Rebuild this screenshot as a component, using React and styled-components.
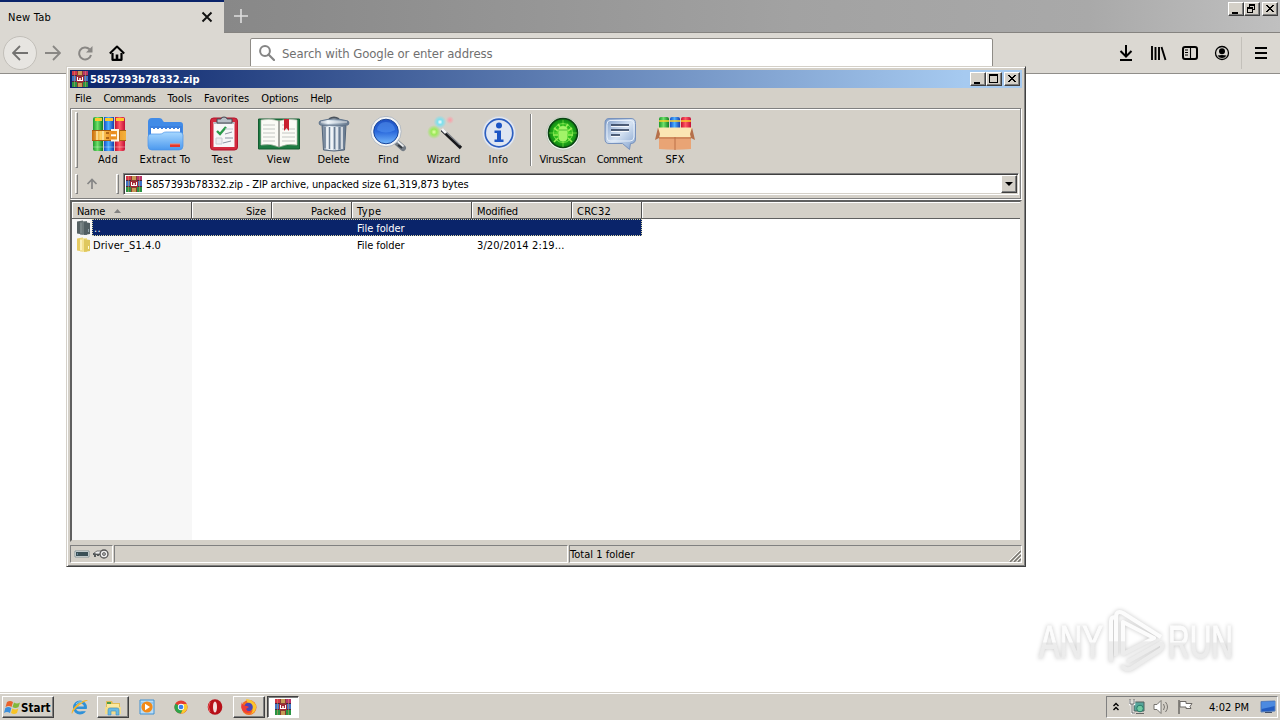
import React, { useLayoutEffect, useRef } from 'react';
import styled, { createGlobalStyle, css } from 'styled-components';

const face = '#d4d0c8';
const navy = '#0a246a';

const Global = createGlobalStyle`
  * { box-sizing: border-box; }
  html, body { margin: 0; padding: 0; overflow: hidden; background: #fff; }
  body { font: 11px/14px "DejaVu Sans Condensed", "DejaVu Sans", sans-serif; color: #000; }
  svg { display: block; flex: none; }
`;

const Span = styled.span`
  display: inline-block;
  white-space: pre;
  flex: none;
  padding-top: 2px;
`;

/* Spreads the letters so that the label takes the given width. */
function Label({ w, children, ...rest }) {
  const ref = useRef(null);
  useLayoutEffect(() => {
    const el = ref.current;
    el.style.letterSpacing = '0px';
    const natural = el.getBoundingClientRect().width;
    el.style.letterSpacing = `${(w - natural) / children.length}px`;
  }, [w, children]);
  return <Span ref={ref} {...rest}>{children}</Span>;
}

const Desktop = styled.div`
  position: relative;
  width: 1280px;
  height: 720px;
  display: flex;
  flex-direction: column;
  background: #fff;
  overflow: hidden;
`;

/* ---------- browser ---------- */
const TabStrip = styled.div`
  height: 33px;
  display: flex;
  background: linear-gradient(90deg, #808080 0, #8b8b8b 24%, #a2a2a2 62%, #a9a9a9 85%, #c0c0c0 100%);
`;
const Tab = styled.div`
  width: 224px;
  display: flex;
  align-items: center;
  justify-content: space-between;
  padding: 0 11px 2px 8px;
  border-top: 2px solid ${navy};
  background: #dbd8d2;
`;
const StripRest = styled.div`
  flex: 1;
  display: flex;
  align-items: flex-start;
  justify-content: space-between;
  padding: 2px 2px 0 9px;
  border-bottom: 1px solid #858380;
`;
const NewTab = styled.div`
  padding-top: 6px;
`;
const CaptionButtons = styled.div`
  display: flex;
  align-items: center;
`;
const CaptionButton = styled.div`
  width: 16px;
  height: 14px;
  margin-left: ${(p) => p.$gap || 0}px;
  background: ${face};
  border: 1px solid;
  border-color: #fff #404040 #404040 #fff;
  box-shadow: inset -1px -1px 0 #808080;
`;
const NavBar = styled.div`
  height: 41px;
  display: flex;
  align-items: flex-start;
  background: #dbd8d2;
  border-bottom: 1px solid #908e8a;
`;
const NavButtons = styled.div`
  width: 250px;
  display: flex;
  align-items: center;
  height: 40px;
  padding-left: 3px;
`;
const BackCircle = styled.div`
  width: 34px;
  height: 34px;
  display: flex;
  align-items: center;
  justify-content: center;
  border-radius: 50%;
  border: 1px solid #c2bfb9;
  background: #e7e5e1;
  margin-right: 8px;
`;
const SearchBox = styled.div`
  width: 743px;
  height: 32px;
  margin-top: 5px;
  display: flex;
  align-items: center;
  gap: 7px;
  padding: 0 8px 2px;
  border: 1px solid #8f8c87;
  border-radius: 2px;
  background: #fff;
  color: #707070;
  font-size: 13px;
`;
const NavTools = styled.div`
  flex: 1;
  height: 40px;
  display: flex;
  align-items: center;
  justify-content: flex-end;
  gap: 14px;
  padding-right: 10px;
`;
const ToolRule = styled.div`
  width: 1px;
  height: 32px;
  margin: 0 -4px;
  background: #c3c0ba;
`;
const Page = styled.div`
  flex: 1;
  background: #fff;
`;

/* ---------- archive window ---------- */
const Window = styled.div`
  position: absolute;
  left: 66px;
  top: 66px;
  width: 960px;
  height: 501px;
  display: flex;
  flex-direction: column;
  padding: 2px 2px 1px;
  background: ${face};
  border: 1px solid;
  border-color: ${face} #404040 #404040 ${face};
  box-shadow: inset 1px 1px 0 #fff, inset -1px -1px 0 #808080;
`;
const TitleBar = styled.div`
  height: 18px;
  margin: 1px 1px 0;
  display: flex;
  align-items: center;
  gap: 2px;
  padding: 0 2px;
  color: #fff;
  font-weight: bold;
  background: linear-gradient(90deg, ${navy}, #a6caf0 94%);
`;
const Spacer = styled.div`
  flex: 1;
`;
const MenuBar = styled.div`
  height: 20px;
  display: flex;
  align-items: center;
  padding-left: 6px;
  gap: 12px;
`;
const Bars = styled.div`
  height: 91px;
  margin: 0 2px 0 1px;
  border: 1px solid #808080;
  box-shadow: inset 1px 1px 0 #fff, 1px 1px 0 #fff;
`;
const ToolBar = styled.div`
  height: 63px;
  display: flex;
  padding: 3px 0 0 4px;
`;
const Grip = styled.div`
  width: 3px;
  height: ${(p) => p.$h}px;
  margin-right: ${(p) => p.$after}px;
  background: ${face};
  border: 1px solid;
  border-color: #fff #808080 #808080 #fff;
`;
const Tool = styled.div`
  width: ${(p) => p.$w}px;
  display: flex;
  flex-direction: column;
  align-items: center;
  gap: 1px;
  padding-top: 4px;
  > span { padding-top: 0; }
`;
const ToolRuleTall = styled.div`
  width: 2px;
  height: 52px;
  margin: 2px 0 0 4px;
  background: #fff;
  border-left: 1px solid #808080;
`;
const AddressRow = styled.div`
  height: 26px;
  display: flex;
  align-items: center;
  padding: 0 1px 2px 4px;
`;
const UpCell = styled.div`
  width: 38px;
  padding-left: 6px;
`;
const AddressBox = styled.div`
  flex: 1;
  height: 22px;
  display: flex;
  align-items: center;
  gap: 4px;
  padding: 0 1px 0 2px;
  background: #fff;
  border: 1px solid;
  border-color: #808080 #fff #fff #808080;
  box-shadow: inset 1px 1px 0 #404040, inset -1px -1px 0 ${face};
`;
const DropButton = styled(CaptionButton)`
  height: 18px;
  display: flex;
  align-items: center;
  justify-content: center;
`;
const List = styled.div`
  height: 342px;
  margin: 1px 1px 0;
  display: flex;
  flex-direction: column;
  background: #fff;
  border: 2px solid;
  border-color: #606060 ${face} ${face} #606060;
  box-shadow: inset -1px 0 0 #f2f0ec;
`;
const columns = css`
  display: grid;
  grid-template-columns: 120px 80px 80px 120px 100px 70px 1fr;
  grid-template-rows: 17px;
`;
const HeaderRow = styled.div`
  ${columns}
  flex: none;
  height: 17px;
`;
const HeaderCell = styled.div`
  display: flex;
  align-items: center;
  gap: 9px;
  justify-content: ${(p) => (p.$right ? 'flex-end' : 'flex-start')};
  padding: 1px 5px 0;
  background: ${face};
  border-bottom: 1px solid #606060;
  border-right: ${(p) => (p.$last ? 0 : 1)}px solid #505050;
  box-shadow: inset 1px 1px 0 #fff;
`;
const Rows = styled.div`
  flex: 1;
  background: linear-gradient(90deg, #f7f7f7 120px, #fff 120px);
`;
const Row = styled.div`
  ${columns}
  height: 17px;
  align-items: center;
  position: relative;
  color: ${(p) => (p.$on ? '#fff' : '#000')};
  background: ${(p) => (p.$on ? `linear-gradient(90deg, transparent 20px, ${navy} 20px, ${navy} 570px, transparent 570px)` : 'none')};
`;
const Focus = styled.div`
  position: absolute;
  left: 20px;
  top: 0;
  width: 550px;
  height: 17px;
  border: 1px dotted #d8d4a0;
`;
const Cell = styled.div`
  padding-left: ${(p) => (p.$col === 1 ? 4 : 5)}px;
  display: flex;
  align-items: center;
  gap: ${(p) => p.$gap || 1}px;
  grid-column: ${(p) => p.$col};
`;
const StatusBar = styled.div`
  height: 18px;
  margin: 3px 1px 0;
  display: flex;
  gap: 1px;
`;
const StatusPane = styled.div`
  width: ${(p) => p.$w}px;
  display: flex;
  align-items: center;
  gap: 4px;
  padding: ${(p) => p.$pad || '0 1px'};
  justify-content: ${(p) => (p.$wide ? 'space-between' : 'flex-start')};
  border: 1px solid;
  border-color: #808080 #fff #fff #808080;
`;

/* ---------- taskbar ---------- */
const TaskBar = styled.div`
  height: 28px;
  display: flex;
  align-items: flex-end;
  padding: 0 2px 2px;
  background: ${face};
  box-shadow: inset 0 1px 0 ${face}, inset 0 2px 0 #fff;
`;
const TaskButton = styled.div`
  width: ${(p) => p.$w || 32}px;
  height: 22px;
  display: flex;
  align-items: center;
  justify-content: center;
  font-weight: bold;
  font-size: 11.5px;
  margin-right: ${(p) => p.$after || 2}px;
  background: ${(p) => (p.$down ? '#fff' : 'transparent')};
  ${(p) => (p.$raised || p.$down) && css`
    border: 1px solid;
    border-color: ${p.$down ? '#404040 #fff #fff #404040' : '#fff #404040 #404040 #fff'};
    box-shadow: ${p.$down ? 'inset 1px 1px 0 #808080' : 'inset -1px -1px 0 #808080'};
  `}
`;
const StartButton = styled(TaskButton)`
  justify-content: flex-start;
  padding-left: 1px;
`;
const Tray = styled.div`
  width: 172px;
  height: 22px;
  display: flex;
  align-items: center;
  padding: 0 1px 0 6px;
  gap: 8px;
  border: 1px solid;
  border-color: #808080 #fff #fff #808080;
`;
const Watermark = styled.div`
  position: absolute;
  left: 1028px;
  top: 601px;
`;

/* ---------- glyphs ---------- */
const Svg = ({ w = 16, h = 16, vb, children, ...r }) => (
  <svg width={w} height={h} viewBox={vb || `0 0 ${w} ${h}`} fill="none" {...r}>{children}</svg>
);

const capPaths = {
  min: <path d="M3 9h6v2H3z" fill="#000" />,
  max: <path fillRule="evenodd" d="M2 1h9v9H2zM3 3v6h7V3z" fill="#000" />,
  restore: <path fillRule="evenodd" d="M4 1h6v6H8v3H2V4h2zM5 3v1h3v2h1V3zM3 6v3h4V6z" fill="#000" />,
  close: <path d="M3 2h2v1h1v1h2V3h1V2h2v1h-1v1H9v1H8v1h1v1h1v1h1v1H9V8H8V7H6v1H5v1H3V8h1V7h1V6h1V5H5V4H4V3H3z" fill="#000" />,
};
const Caption = ({ kind, gap }) => (
  <CaptionButton $gap={gap}>
    <Svg w={14} h={12} shapeRendering="crispEdges">{capPaths[kind]}</Svg>
  </CaptionButton>
);

const RarSmall = () => (
  <Svg shapeRendering="crispEdges">
    <path d="M0 0h16v5H0z" fill="#d23448" />
    <path d="M10 0h6v5h-6z" fill="#b83468" />
    <path d="M0 5h16v6H0z" fill="#3f72c4" />
    <path d="M0 11h16v5H0z" fill="#2a9442" />
    <path d="M0 4h16v1H0zM0 10h16v1H0z" fill="#4a2440" />
    <path d="M2 0h1v16H2zM13 0h1v16h-1z" fill="#d8a060" opacity=".5" />
    <path d="M5 0h6v16H5z" fill="#8b3a30" />
    <path d="M6 0h4v4H6zM6 12h4v4H6z" fill="#c89a55" />
    <path d="M4 5h8v6H4z" fill="#a02838" />
    <path d="M5 6h1v3h1V7h2v2h1V6h1v4H5z" fill="#fff" />
    <path d="M7 7h2v2H7z" fill="#f0c8c0" />
  </Svg>
);

const FolderSmall = ({ dark }) => (
  <Svg>
    <path d="M1 1.500 7 .5v14L1 13.500z" fill={dark ? '#566163' : '#e6cb62'} />
    <path d="M4 1.500 11 1v14l-7-.5z" fill={dark ? '#6d797b' : '#f4e293'} />
    <path d="M8 2 14 3v11l-6 1z" fill={dark ? '#525f63' : '#dfc85e'} />
    <path d="M5 3v10" stroke={dark ? '#7f8b8c' : '#fff6c8'} strokeWidth="1.500" />
    <path d="M12 9h1v3h-1z" fill={dark ? '#91a3ab' : '#fffbd8'} />
  </Svg>
);

const Defs = () => (
  <svg width="0" height="0" style={{ position: 'absolute' }}>
    <defs>
      <linearGradient id="gG"><stop stopColor="#1d9a2c" /><stop offset=".45" stopColor="#6fe06a" /><stop offset="1" stopColor="#0f7f22" /></linearGradient>
      <linearGradient id="gB"><stop stopColor="#1450c8" /><stop offset=".45" stopColor="#4db0ff" /><stop offset="1" stopColor="#173fae" /></linearGradient>
      <linearGradient id="gR"><stop stopColor="#c81030" /><stop offset=".45" stopColor="#ff5a66" /><stop offset="1" stopColor="#c30f38" /></linearGradient>
      <linearGradient id="gO"><stop stopColor="#c96a0a" /><stop offset=".25" stopColor="#ffd060" /><stop offset=".6" stopColor="#e88a1c" /><stop offset="1" stopColor="#f4b23c" /></linearGradient>
      <linearGradient id="gF" x2="0" y2="1"><stop stopColor="#a8d8ff" /><stop offset="1" stopColor="#4b98ee" /></linearGradient>
      <linearGradient id="gT"><stop stopColor="#6a7c92" /><stop offset=".3" stopColor="#eaf2f8" /><stop offset=".65" stopColor="#a5b5c4" /><stop offset="1" stopColor="#5f6f85" /></linearGradient>
      <linearGradient id="gL" x2="0" y2="1"><stop stopColor="#1f50c0" /><stop offset=".5" stopColor="#2a68dc" /><stop offset="1" stopColor="#7cc0ff" /></linearGradient>
      <linearGradient id="gC" x2="1" y2="1"><stop stopColor="#7e9cc8" /><stop offset=".5" stopColor="#d5e2f2" /><stop offset="1" stopColor="#7f9fcc" /></linearGradient>
      <linearGradient id="gW" x2="0" y2="1"><stop offset=".5" stopColor="#fcfcfc" /><stop offset=".52" stopColor="#ececec" /></linearGradient>
      <radialGradient id="gV"><stop stopColor="#64ee30" /><stop offset=".6" stopColor="#23b41a" /><stop offset="1" stopColor="#0d8012" /></radialGradient>
      <radialGradient id="s1"><stop stopColor="#eaffb0" /><stop offset=".4" stopColor="#9bea58" /><stop offset="1" stopColor="#9bea58" stopOpacity="0" /></radialGradient>
      <radialGradient id="s2"><stop stopColor="#fff" /><stop offset=".4" stopColor="#7de0ee" /><stop offset="1" stopColor="#7de0ee" stopOpacity="0" /></radialGradient>
      <radialGradient id="s3"><stop stopColor="#ff9aa5" /><stop offset="1" stopColor="#ff9aa5" stopOpacity="0" /></radialGradient>
    </defs>
  </svg>
);

const toolArt = {
  Add: (
    <Svg w={36} h={36} style={{ marginLeft: 1 }}>
      <path d="M2 3q0-2 2-2h8v34H4q-2 0-2-2z" fill="url(#gG)" />
      <path d="M13 1h10v34H13z" fill="url(#gB)" />
      <path d="M24 1h8q2 0 2 2v30q0 2-2 2h-8z" fill="url(#gR)" />
      <path d="M4 2h7v3H4zM14 2h8v3h-8zM25 2h8v3h-8z" fill="#ffca2c" />
      <path d="M2 31h10M13 31h10M24 31h10" stroke="#fff" opacity=".35" />
      <path d="M1 14h34v11H1z" fill="url(#gO)" />
      <path d="M1 14.500h34M1 24.500h34" stroke="#a65c10" />
      <path d="M6 15v9M12 15v9" stroke="#ffe8a8" strokeWidth="1.500" />
      <path d="M15 17h3M15 22h3" stroke="#9a520c" strokeWidth="1.500" />
      <path d="M20 14h7v10.500h-7" stroke="#fff6e2" strokeWidth="2" />
      <path d="M20 19.300h5" stroke="#fff" strokeWidth="2" />
      <path d="M28.500 13.500v12" stroke="#b56c1c" />
    </Svg>
  ),
  'Extract To': (
    <Svg w={40} h={36} style={{ marginLeft: 2 }}>
      <path d="M2 6q0-4 4-4h7q3 0 4 3l1 1h16q3 0 3 3v15H2z" fill="#418be7" />
      <path d="M4 10h32v12H4z" fill="#3b80df" />
      <path d="M5 13v-1h2v1h2v-1h2v1h2v-1h2v1h2v-1h2v1h2v-1h2v1h2v-1h2v1h2v-1h2v1h2v-1h1v10H5z" fill="#fff" />
      <path d="M2 21q0-3 3-3h9q2 0 3-1t3-1h13q4 0 4 3v11q0 4-4 4H6q-4 0-4-4z" fill="url(#gF)" stroke="#4a94e8" strokeWidth=".7" />
      <path d="M24 28h10v3H24z" fill="#e5362c" />
      <path d="M24 28h10" stroke="#f78b75" />
    </Svg>
  ),
  Test: (
    <Svg w={32} h={36} style={{ marginLeft: 3 }}>
      <rect x="2.500" y="2" width="27" height="32" rx="3" fill="#d32a3e" stroke="#b3152d" />
      <path d="M5.500 6h21v25h-21z" fill="#f7f7f8" />
      <path d="M5.500 6h21v2h-21z" fill="#b9bcc4" />
      <path d="M9 3h4q0-2 3-2t3 2h5v4H9z" fill="#b7bec6" stroke="#444a52" />
      <path d="M8 22h6v6H8z" stroke="#c8ccd2" fill="#eceef0" />
      <path d="m9 15 3 3 6-7" stroke="#2c9b4a" strokeWidth="2.400" />
      <path d="m17 18 7-2M17 22h8M15 27l8-2" stroke="#8b95a3" />
      <path d="M17 13h8" stroke="#c3c9d0" />
    </Svg>
  ),
  View: (
    <Svg w={44} h={36}>
      <path d="M1.500 3h41v30h-41z" fill="#1d7b42" stroke="#145c31" />
      <path d="M4 4q10-2 18 1 8-3 18-1v25q-10-2-18 2-8-4-18-2z" fill="#fbfbf6" stroke="#bfc3b4" strokeWidth=".7" />
      <path d="M22 5v26" stroke="#8a8d86" strokeWidth="1.500" />
      <path d="M6 9h12M6 13h12M6 17h12M6 21h12M6 25h12M25 17h13M25 21h13M25 25h13M25 13h13M25 9h3" stroke="#c4c7c3" />
      <path d="M27 3h5v12l-2.500-3-2.500 3z" fill="#c92030" />
    </Svg>
  ),
  Delete: (
    <Svg w={34} h={36} style={{ marginLeft: 1 }}>
      <path d="M5 9h24l-1.500 25q-10.500 2-21 0z" fill="url(#gT)" stroke="#53657a" />
      <path d="M10 11v22M15 11v23M20 11v23M25 11v22" stroke="#fff" strokeWidth="1.300" />
      <path d="M8 11v21M12.500 11v22M17.500 11v22M22.500 11v22M27 11v20" stroke="#6b7e94" strokeWidth="1.300" />
      <path d="M12 3q5-3 10 0" stroke="#4a525c" strokeWidth="2" />
      <path d="M3 5q14-4 28 0 2 2 0 4H3q-2-2 0-4z" fill="url(#gT)" stroke="#62768d" />
      <path d="M4 6h26" stroke="#fff" strokeWidth=".8" />
    </Svg>
  ),
  Find: (
    <Svg w={38} h={36} style={{ marginLeft: -1 }}>
      <path d="m25 24 9 8" stroke="#747c85" strokeWidth="6" strokeLinecap="round" />
      <path d="m26 23 8 7" stroke="#e9ebed" strokeWidth="1.700" strokeLinecap="round" />
      <path d="m29 29 4 3" stroke="#33383f" strokeWidth="2" />
      <circle cx="17" cy="15.500" r="13.800" fill="url(#gL)" stroke="#f2f4f6" strokeWidth="3" />
      <circle cx="17" cy="15.500" r="15.200" stroke="#9aa4b0" strokeWidth=".7" />
      <circle cx="17" cy="15.500" r="12.300" stroke="#184498" />
      <path d="M8 14q1-8 9-8t9 8q-9 5-18 0z" fill="#6fb1ff" opacity=".35" />
    </Svg>
  ),
  Wizard: (
    <Svg w={38} h={36}>
      <circle cx="9" cy="16" r="7" fill="url(#s1)" /><circle cx="15" cy="6" r="6.500" fill="url(#s2)" /><circle cx="25" cy="4" r="4" fill="url(#s3)" />
      <path d="m17 14 19 18" stroke="#17181b" strokeWidth="3.200" />
      <path d="m18 13 17 16" stroke="#8a8e94" strokeWidth="1.200" />
      <path d="m17 13 4 4" stroke="#f3f3f3" strokeWidth="3" />
      <path d="m16 14 4 4" stroke="#777b84" />
    </Svg>
  ),
  Info: (
    <Svg w={36} h={36}>
      <circle cx="18" cy="17" r="16.500" fill="#e6e9f0" stroke="#ccd2dc" strokeWidth=".7" />
      <circle cx="18" cy="17" r="13.800" fill="#dfe6f2" stroke="#2d5fc0" strokeWidth="1.700" />
      <circle cx="18" cy="9.500" r="3" fill="#1c55c5" />
      <path d="M13.500 14.500H20v9h2.500v2.500h-9v-2.500H16V17h-2.500z" fill="#1c55c5" />
    </Svg>
  ),
  VirusScan: (
    <Svg w={36} h={36}>
      <circle cx="18" cy="17.500" r="16.500" fill="#f3f6f2" stroke="#b0bcae" strokeWidth=".7" />
      <circle cx="18" cy="17" r="14.500" fill="url(#gV)" stroke="#0b4412" strokeWidth="1.700" />
      <circle cx="18" cy="17" r="9.500" stroke="#96f35a" strokeWidth=".7" />
      <path d="M18 4v27M4 17h28" stroke="#8df04e" strokeWidth=".6" />
      <path d="M13.500 14q0-4 4.500-4t4.500 4v8q-1 3.500-4.500 3.500T13.500 22z" fill="#a2f368" />
      <path d="m13 15-4-3m4 7H8m5 3-4 4m14-11 4-3m-4 7h5m-5 3 4 4M15 11l-2-3m8 3 2-3" stroke="#96ee55" strokeWidth="1.600" />
      <path d="M14 14h8" stroke="#3fb02c" strokeWidth=".8" />
    </Svg>
  ),
  Comment: (
    <Svg w={36} h={36}>
      <path d="M7 2.500h22q4.500 0 4.500 5v15.500q0 4.500-5 4.500l-1 6-7-6H7q-4 0-4-4.500V7q0-4.500 4-4.500z" fill="url(#gC)" stroke="#7892bd" />
      <path d="M8 4.500h21q3 0 3 4V21q0 4-4 4H8q-3 0-3-4V8.500q0-4 3-4z" stroke="#e8f0fa" />
      <path d="M9 9h18M9 14h18M9 19h9" stroke="#fff" transform="translate(0 1.300)" />
      <path d="M9 9h18M9 14h18M9 19h9" stroke="#253450" strokeWidth="1.400" />
    </Svg>
  ),
  SFX: (
    <Svg w={42} h={36}>
      <rect x="5" y="1" width="10" height="14" rx="2" fill="url(#gG)" /><rect x="16" y="1" width="10" height="14" rx="2" fill="url(#gB)" /><rect x="27" y="1" width="10" height="14" rx="2" fill="url(#gR)" />
      <path d="M5 5h10M16 5h10M27 5h10" stroke="#ffd02a" strokeWidth="1.500" />
      <path d="M5 13h32v20q-16 1.500-32 0z" fill="#e9a475" />
      <path d="M5 20h32v3H5z" fill="#d18a5c" /><path d="M21 21v13" stroke="#bc7048" />
      <path d="M4 11.500h34l-1 9.500H5z" fill="#fbe6b3" />
      <path d="M4 11.500 1 24l4-2 1-4zM38 11.500 41 24l-4-2-1-4z" fill="#b56f4a" />
    </Svg>
  ),
};

const tools = [
  ['Add', 56, 20], ['Extract To', 58, 51], ['Test', 57, 21.5], ['View', 55, 23.5], ['Delete', 55, 32],
  ['Find', 55, 21], ['Wizard', 55, 33.5], ['Info', 55, 20], null,
  ['VirusScan', 61, 46], ['Comment', 53, 45.5], ['SFX', 58, 19],
];
const menus = [['File', 16.5], ['Commands', 52], ['Tools', 24.5], ['Favorites', 45.3], ['Options', 37], ['Help', 21.5]];
const heads = [['Name', 28], ['Size', 20, 1], ['Packed', 35, 1], ['Type', 24.5], ['Modified', 41], ['CRC32', 34]];

function Browser() {
  return (
    <>
      <TabStrip>
        <Tab>
          <Label w={43}>New Tab</Label>
          <Svg w={12} h={12}><path d="m1.500 1.500 9 9m0-9-9 9" stroke="#111" strokeWidth="1.900" /></Svg>
        </Tab>
        <StripRest>
          <NewTab><Svg><path d="M8 1v14M1 8h14" stroke="#dedede" strokeWidth="1.600" /></Svg></NewTab>
          <CaptionButtons><Caption kind="min" /><Caption kind="restore" /><Caption kind="close" gap={2} /></CaptionButtons>
        </StripRest>
      </TabStrip>
      <NavBar>
        <NavButtons>
          <BackCircle><Svg><path d="M16 8H1m7-7L1 8l7 7" stroke="#737270" strokeWidth="1.800" /></Svg></BackCircle>
          <Svg><path d="M0 8h15M8 1l7 7-7 7" stroke="#898784" strokeWidth="1.800" /></Svg>
          <Svg style={{ marginLeft: 16 }}><path d="M12.500 4.200A6 6 0 1 0 14 10" stroke="#898784" strokeWidth="2" /><path d="M15.500 1v6.500H9z" fill="#898784" /></Svg>
          <Svg style={{ marginLeft: 16 }}><path d="M0.800 8.500 8 1.500l7.200 7" stroke="#000" strokeWidth="2" strokeLinejoin="round" /><path d="M3.500 8v6.800h9V8" stroke="#000" strokeWidth="2.200" strokeLinejoin="round" /><path d="M6.700 9.500h2.600v5H6.700z" fill="#000" /></Svg>
        </NavButtons>
        <SearchBox>
          <Svg><circle cx="6" cy="6" r="4.900" stroke="#858585" strokeWidth="2" /><path d="m9.500 9.500 5.500 5.500" stroke="#858585" strokeWidth="2.200" strokeLinecap="round" /></Svg>
          <Label w={210.5}>Search with Google or enter address</Label>
        </SearchBox>
        <NavTools>
          <Svg w={18} h={18}><path d="M9 1v11M3.500 7 9 12.500 14.500 7M3 16h12" stroke="#000" strokeWidth="2" /></Svg>
          <Svg w={18} h={18}><path d="M3 2v14M6.500 3v13M10 3v13M12.500 3l4 13" stroke="#000" strokeWidth="1.900" /></Svg>
          <Svg w={18} h={18}><rect x="2" y="3" width="14" height="12" rx="2" stroke="#000" strokeWidth="2" /><path d="M9.500 3v12M4 6h3M4 8.500h3M4 11h3" stroke="#000" strokeWidth="1.100" /></Svg>
          <Svg w={18} h={18}><circle cx="9" cy="9" r="6.500" stroke="#000" strokeWidth="1.300" /><circle cx="9" cy="7.300" r="3" fill="#000" /><path d="M4.500 11.500q4.500-1 9 0Q12 14 9 14t-4.500-2.500z" fill="#000" /></Svg>
          <ToolRule />
          <Svg w={18} h={18}><path d="M3 4h12M3 9h12M3 14h12" stroke="#000" strokeWidth="2" /></Svg>
        </NavTools>
      </NavBar>
      <Page />
    </>
  );
}

function ArchiveWindow() {
  return (
    <Window>
      <TitleBar>
        <RarSmall />
        <Label w={109.5}>5857393b78332.zip</Label>
        <Spacer />
        <CaptionButtons><Caption kind="min" /><Caption kind="max" /><Caption kind="close" gap={2} /></CaptionButtons>
      </TitleBar>
      <MenuBar>{menus.map(([t, w]) => <Label key={t} w={w}>{t}</Label>)}</MenuBar>
      <Bars>
        <ToolBar>
          <Grip $h={56} $after={2} />
          {tools.map((t, i) => t
            ? <Tool key={i} $w={t[1]}>{toolArt[t[0]]}<Label w={t[2]}>{t[0]}</Label></Tool>
            : <ToolRuleTall key={i} />)}
        </ToolBar>
        <AddressRow>
          <Grip $h={20} $after={0} />
          <UpCell><Svg><path d="M8 13V4M3.500 8 8 3.500 12.500 8" stroke="#858585" strokeWidth="1.700" /></Svg></UpCell>
          <Grip $h={20} $after={4} />
          <AddressBox>
            <RarSmall />
            <Label w={322.5}>5857393b78332.zip - ZIP archive, unpacked size 61,319,873 bytes</Label>
            <Spacer />
            <DropButton><Svg w={8} h={5}><path d="M0 0h8L4 4z" fill="#000" /></Svg></DropButton>
          </AddressBox>
        </AddressRow>
      </Bars>
      <List>
        <HeaderRow>
          {heads.map(([t, w, r]) => (
            <HeaderCell key={t} $right={r}>
              <Label w={w}>{t}</Label>
              {t === 'Name' && <Svg w={7} h={4}><path d="M0 4h7L3.500 0z" fill="#808080" /></Svg>}
            </HeaderCell>
          ))}
          <HeaderCell $last />
        </HeaderRow>
        <Rows>
          <Row $on>
            <Focus />
            <Cell $col={1} $gap={2}><FolderSmall dark /><Label w={7}>..</Label></Cell>
            <Cell $col={4}><Label w={47.5}>File folder</Label></Cell>
          </Row>
          <Row>
            <Cell $col={1}><FolderSmall /><Label w={68}>Driver_S1.4.0</Label></Cell>
            <Cell $col={4}><Label w={47.5}>File folder</Label></Cell>
            <Cell $col={5}><Label w={87.5}>3/20/2014 2:19...</Label></Cell>
          </Row>
        </Rows>
      </List>
      <StatusBar>
        <StatusPane $w={43} $pad="0 3px">
          <Svg><path d="M1 5h14v6H1z" fill="#f8fafa" stroke="#849498" /><path d="M2 6h12v4H2z" fill="#3a5057" /><path d="M3 8h1" stroke="#9bd" /></Svg>
          <Svg style={{ marginLeft: -1 }}><path d="M0 7h8v2H0zM1 9h2v2H1zM4 9h2v1H4z" fill="#55595a" /><path d="m1 7 3-2h5v3H3z" fill="#eee" stroke="#555" strokeWidth=".7" /><circle cx="11" cy="8" r="4" fill="#eee" stroke="#555" strokeWidth="1.300" /><circle cx="11" cy="8" r="1.500" fill="#aaa" stroke="#555" strokeWidth=".8" /></Svg>
        </StatusPane>
        <StatusPane $w={454} />
        <StatusPane $w={453} $wide $pad="0 0 0 0">
          <Label w={64.5}>Total 1 folder</Label>
          <Svg w={12} h={13} style={{ alignSelf: 'flex-end' }}><path d="M1 13 12 2M5 13l7-7M9 13l3-3" stroke="#77756f" strokeWidth="1.500" /><path d="M0 12 11 1M4 12l8-8M8 12l4-4" stroke="#fff" strokeWidth=".8" /></Svg>
        </StatusPane>
      </StatusBar>
    </Window>
  );
}

function Tasks() {
  return (
    <TaskBar>
      <StartButton $w={52} $raised $after={9}>
        <Svg w={17} h={16}>
          <path d="M3 3q3-2 6 0L7.500 8Q5 6 1.500 8z" fill="#e9622b" /><path d="M10 3.500q3 2 6 0L14.500 8q-3 2-6 0z" fill="#81b83a" />
          <path d="M1.300 9q3-2 6 0L6 14q-3-2-6 0z" fill="#3b8fdc" /><path d="M8.300 9.500q3 2 6 0L13 14q-3 2-6 0z" fill="#f8c325" />
        </Svg>
        <Label w={29.5}>Start</Label>
      </StartButton>
      <TaskButton>
        <Svg w={18} h={18} style={{ marginLeft: 2 }}>
          <circle cx="9" cy="9.500" r="5.500" stroke="#2f91d8" strokeWidth="3" /><path d="M5 8.500h9v2.500H5z" fill="#2f91d8" /><path d="M11 11h6v2.200h-6z" fill={face} />
          <path d="M1 16Q-1 12 8 5q8-5 9-2-1-1-7 3-7 5-9 10z" fill="#f4b52a" /><path d="M5 6q2-3 6-2" stroke="#8bd0f5" />
        </Svg>
      </TaskButton>
      <TaskButton $raised>
        <Svg w={18} h={18}>
          <path d="M2 3h6l1 2h7v11H2z" fill="#e2bc55" /><path d="M3 6h12v9H3z" fill="#fbe9a0" /><path d="M3 5h4" stroke="#4f9b45" strokeWidth="2" />
          <path d="M1 9h16v7H1z" fill="#f3dc8c" /><path d="M4 17v-5q0-2 2-2h7q2 0 2 2v5h-3v-4H7v4z" fill="#68b9e3" stroke="#3c8dc0" strokeWidth=".6" />
        </Svg>
      </TaskButton>
      <TaskButton>
        <Svg><path d="M1 1h14v14H1z" fill="#b9dcf5" stroke="#3f91d2" /><path d="M1 4h14" stroke="#75b5e7" /><circle cx="8" cy="8" r="5.600" fill="#f28a18" /><path d="m6 4.700 5 3.300-5 3.300z" fill="#fff" /></Svg>
      </TaskButton>
      <TaskButton>
        <Svg w={14} h={14} vb="0 0 16 16"><circle cx="8" cy="8" r="7.500" fill="#e53c30" /><path d="M1.500 4.200A7.500 7.500 0 0 0 8 15.500L11 9z" fill="#2ea44a" /><path d="M14.500 4.500A7.500 7.500 0 0 1 8 15.500L11 8 8 4.500z" fill="#f9cb2c" /><circle cx="8" cy="8" r="3.600" fill="#fff" /><circle cx="8" cy="8" r="2.700" fill="#3b80ea" /></Svg>
      </TaskButton>
      <TaskButton>
        <Svg><ellipse cx="8" cy="8" rx="7.300" ry="7.700" fill="#b70f18" /><ellipse cx="8" cy="8" rx="2" ry="5.600" fill="#f4dddd" /><path d="M3 3q-3 5 0 10" stroke="#ef5b5b" /></Svg>
      </TaskButton>
      <TaskButton $raised>
        <Svg w={18} h={18}><circle cx="9" cy="9.500" r="7.500" fill="#f36c21" /><path d="M6 1q6 0 10 6 1 7-5 9 4-5-2-8z" fill="#fcc52d" /><circle cx="8.500" cy="9" r="4.300" fill="#4b46b8" /><path d="M2 4q0 4 5 4l2 1-3 2q1 3 6 2-4 4-9 0-3-4-1-9z" fill="#ee3d39" /></Svg>
      </TaskButton>
      <TaskButton $down><RarSmall /></TaskButton>
      <Spacer />
      <Tray>
        <Svg w={6} h={10}><path d="m.5 4 2.500-2.500L5.500 4m-5 4L3 5.500 5.500 8" stroke="#000" strokeWidth="1.400" /></Svg>
        <Svg style={{ marginLeft: 2 }}><path d="M5 3h10v9H5z" fill="#57a59b" stroke="#53605f" /><path d="M1 1v4h4V1M3 5v9h3" stroke="#fff" strokeWidth="2.500" /><path d="M1 0v5h4V0M3 5v9h3" stroke="#666" /><circle cx="11" cy="9.500" r="3.300" fill="#71c9a2" stroke="#277b6b" /><path d="M7 14.500h8" stroke="#666" /></Svg>
        <Svg w={17} h={16}><path d="M1 5.500h3l4-4v13l-4-4H1z" fill="#fff" stroke="#77746f" /><path d="M10.500 5q2 3 0 6M12.500 3q4 5 0 10" stroke="#77746f" /></Svg>
        <Svg style={{ marginLeft: -1 }}><path d="M2 1v14" stroke="#6d6a66" strokeWidth="1.500" /><path d="M3 2.500h6v2h6l-2 3 1 2H9v-1.500H3z" fill="#fff" stroke="#6d6a66" /></Svg>
        <Label w={40} style={{ marginLeft: 8 }}>4:02 PM</Label>
        <Svg style={{ marginLeft: 3 }}><path d="M1 2.500 15 2v10L1 13z" fill="#225cc1" stroke="#5c81b8" /><path d="M1.500 3 15 2.500V7L1.500 10z" fill="#4c8ae0" /><path d="M5 13.500h7" stroke="#435069" /></Svg>
      </Tray>
    </TaskBar>
  );
}

export default function App() {
  return (
    <Desktop>
      <Global />
      <Defs />
      <Browser />
      <Watermark>
        <Svg w={250} h={80} style={{ filter: 'drop-shadow(0 0 2px rgba(0,0,0,.22))' }} fontFamily="Liberation Sans Narrow, Liberation Sans, sans-serif">
          <g fill="url(#gW)" stroke="url(#gW)" fontSize="46">
            <text x="11" y="57" textLength="64" lengthAdjust="spacingAndGlyphs">ANY</text>
            <text x="140" y="57" textLength="65" lengthAdjust="spacingAndGlyphs">RUN</text>
          </g>
          <path d="M83 61V20q0-4 4-4M88 55V16q0-7 7-4l38 24M95 21v32l31-16zM93 65l5 3q3 1 6-1l28-18q4-3 1-7L99 61" stroke="url(#gW)" strokeWidth="4" strokeLinejoin="round" />
        </Svg>
      </Watermark>
      <ArchiveWindow />
      <Tasks />
    </Desktop>
  );
}
